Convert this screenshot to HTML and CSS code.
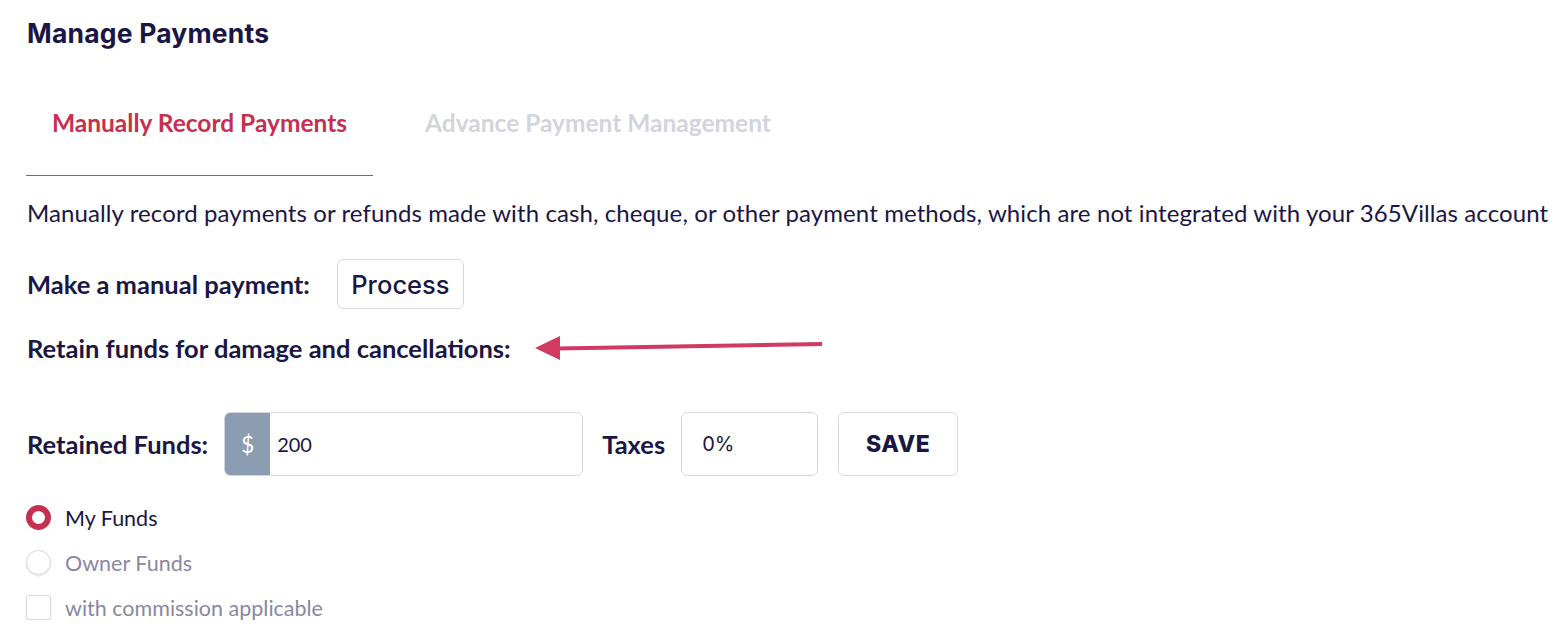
FILE: index.html
```html
<!DOCTYPE html>
<html>
<head>
<meta charset="utf-8">
<link rel="stylesheet" href="styles.css">
</head>
<body>
<div class="page">
  <h1 class="title">Manage Payments</h1>
  <div class="tabs">
    <div class="tab tab-active">Manually Record Payments</div>
    <div class="tab tab-inactive">Advance Payment Management</div>
  </div>
  <p class="desc">Manually record payments or refunds made with cash, cheque, or other payment methods, which are not integrated with your 365Villas account</p>
  <div class="row manual-row">
    <span class="label">Make a manual payment:</span>
    <button class="btn btn-process">Process</button>
  </div>
  <div class="row retain-row">
    <span class="label">Retain funds for damage and cancellations:</span>
    <svg class="arrow" width="292" height="30" viewBox="0 0 292 30">
      <polygon points="0,15 25,3 25,27" fill="#d13a61"/>
      <line x1="22" y1="15.5" x2="287" y2="11" stroke="#d13a61" stroke-width="4"/>
    </svg>
  </div>
  <div class="row funds-row">
    <span class="label">Retained Funds:</span>
    <div class="input-group">
      <span class="addon">$</span>
      <span class="input-value">200</span>
    </div>
    <span class="label taxes-label">Taxes</span>
    <div class="tax-input">0%</div>
    <button class="btn btn-save">SAVE</button>
  </div>
  <div class="options">
    <div class="option">
      <span class="radio radio-on"></span>
      <span class="opt-text opt-active">My Funds</span>
    </div>
    <div class="option">
      <span class="radio"></span>
      <span class="opt-text">Owner Funds</span>
    </div>
    <div class="option">
      <span class="checkbox"></span>
      <span class="opt-text">with commission applicable</span>
    </div>
  </div>
</div>
</body>
</html>
```
FILE: styles.css
```css
html, body {
  margin: 0;
  padding: 0;
  background: #ffffff;
}
body {
  font-family: "Lato", "Liberation Sans", sans-serif;
  color: #1b1644;
}
.page {
  padding: 16px 0 0 27px;
}
.title {
  margin: 0;
  font-family: "Inter", "Liberation Sans", sans-serif;
  font-weight: 700;
  font-size: 26.5px;
  line-height: 34px;
  color: #1b1644;
  letter-spacing: 0.2px;
}
.tabs {
  display: flex;
  margin-top: 58px;
  margin-left: -1px;
}
.tab {
  font-size: 24.5px;
  font-weight: 700;
  height: 68px;
  line-height: 28px;
  padding-top: 1px;
  box-sizing: border-box;
}
.tab-active {
  width: 347px;
  text-align: center;
  color: #c5304f;
  border-bottom: 1px solid #b94a62;
}
.tab-inactive {
  margin-left: 52px;
  color: #d3d4dc;
}
.desc {
  margin: 22px 0 0 0;
  font-size: 24px;
  letter-spacing: 0.1px;
  line-height: 30px;
  color: #1b1644;
  white-space: nowrap;
}
.row {
  display: flex;
  align-items: center;
}
.label {
  font-size: 25.5px;
  font-weight: 700;
  line-height: 30px;
  color: #1b1644;
}
.manual-row {
  margin-top: 31px;
  gap: 27px;
}
.btn {
  background: #fff;
  border: 1px solid #d9d9df;
  border-radius: 6px;
  font-family: "Inter", "Liberation Sans", sans-serif;
  color: #1b1644;
  box-sizing: border-box;
  padding: 0;
}
.btn-process {
  width: 127px;
  height: 50px;
  font-size: 25.5px;
  font-weight: 500;
}
.retain-row {
  margin-top: 24px;
  gap: 24px;
}
.arrow {
  display: block;
}
.funds-row {
  margin-top: 49px;
}
.input-group {
  display: flex;
  margin-left: 16px;
  width: 359px;
  height: 64px;
  border: 1px solid #d5d6de;
  border-radius: 6px;
  box-sizing: border-box;
  overflow: hidden;
}
.addon {
  width: 45px;
  background: #8d9db1;
  color: #fff;
  font-size: 23px;
  display: flex;
  align-items: center;
  justify-content: center;
}
.input-value {
  display: flex;
  align-items: center;
  padding-left: 7px;
  font-size: 20px;
}
.taxes-label {
  margin-left: 19px;
}
.tax-input {
  margin-left: 16px;
  width: 137px;
  height: 64px;
  border: 1px solid #d5d6de;
  border-radius: 6px;
  box-sizing: border-box;
  display: flex;
  align-items: center;
  padding-left: 20px;
  font-family: "Inter", "Liberation Sans", sans-serif;
  font-size: 20px;
}
.btn-save {
  margin-left: 20px;
  width: 120px;
  height: 64px;
  font-size: 23px;
  font-weight: 800;
  letter-spacing: 0.5px;
}
.options {
  margin-top: 29px;
  margin-left: -1px;
  display: flex;
  flex-direction: column;
  gap: 20px;
}
.option {
  display: flex;
  align-items: center;
  height: 25px;
}
.radio {
  width: 25px;
  height: 25px;
  border-radius: 50%;
  border: 1px solid #d9d9df;
  box-shadow: 0 1px 2px rgba(0,0,0,0.12);
  box-sizing: border-box;
  background: #fff;
}
.radio-on {
  border: 6.5px solid #c5304f;
  box-shadow: none;
}
.checkbox {
  width: 25px;
  height: 25px;
  border-radius: 3px;
  border: 1px solid #d9d9df;
  box-shadow: 0 1px 2px rgba(0,0,0,0.12);
  box-sizing: border-box;
  background: #fff;
}
.opt-text {
  margin-left: 14px;
  font-size: 21.5px;
  color: #8a87a3;
}
.opt-active {
  color: #1b1644;
}
```
